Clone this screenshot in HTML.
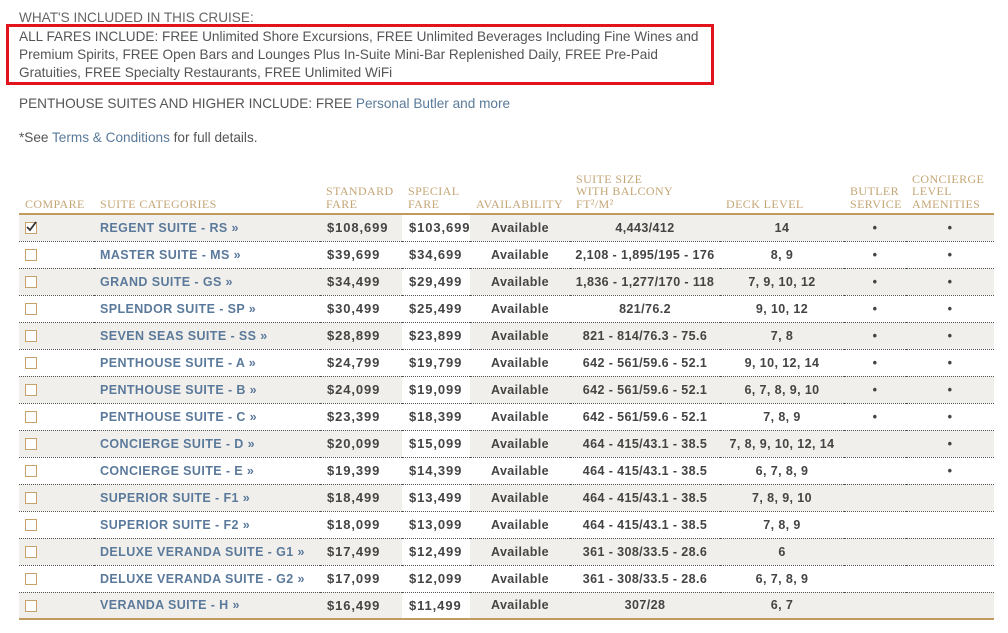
<!DOCTYPE html>
<html><head><meta charset="utf-8"><style>
*{margin:0;padding:0;box-sizing:border-box}
body{width:1008px;height:633px;background:#fff;font-family:"Liberation Sans",sans-serif;color:#555;position:relative;overflow:hidden}
.t{position:absolute;font-size:13.6px;white-space:nowrap}
.box{position:absolute;left:6px;top:24px;width:708px;height:61px;border:3px solid #e3131c}
.lnk{color:#5a7a9a}
table{position:absolute;left:19px;top:166px;width:975px;border-collapse:collapse;table-layout:fixed}
th{font-family:"Liberation Serif",serif;font-weight:normal;color:#c4a676;font-size:12px;letter-spacing:0.4px;text-align:left;vertical-align:bottom;line-height:12.5px;padding:0 0 3px 6px;height:48px;border-bottom:2px solid #c09a5e}
td{height:27px;border-bottom:1px dotted #555;font-weight:bold;font-size:12.5px;letter-spacing:0.4px;color:#444;text-align:center;white-space:nowrap}
tr:last-child td{border-bottom:2px solid #c09a5e}
tbody tr:nth-child(odd) td{background:#f1efeb}
tbody tr td.sp{background:#fff !important}
td.n{text-align:left;color:#5b7a9b;padding-left:6px}
td.c{text-align:left;padding-left:6px}
td.f{text-align:left;padding-left:7px;font-size:13px;letter-spacing:0.9px}
.cb{display:inline-block;width:12px;height:12px;border:1.5px solid #c9a16a;background:#fff;vertical-align:middle;position:relative}
</style></head><body>
<div class="t" style="left:19px;top:10px;color:#666">WHAT'S INCLUDED IN THIS CRUISE:</div>
<div class="box"></div>
<div class="t" style="left:19px;top:28px;line-height:18px">ALL FARES INCLUDE: FREE Unlimited Shore Excursions, FREE Unlimited Beverages Including Fine Wines and<br>Premium Spirits, FREE Open Bars and Lounges Plus In-Suite Mini-Bar Replenished Daily, FREE Pre-Paid<br>Gratuities, FREE Specialty Restaurants, FREE Unlimited WiFi</div>
<div class="t" style="left:19px;top:96px">PENTHOUSE SUITES AND HIGHER INCLUDE: FREE <span class="lnk">Personal Butler and more</span></div>
<div class="t" style="left:19px;top:130px">*See <span class="lnk">Terms &amp; Conditions</span> for full details.</div>
<table>
<colgroup><col style="width:75px"><col style="width:226px"><col style="width:82px"><col style="width:68px"><col style="width:100px"><col style="width:150px"><col style="width:124px"><col style="width:62px"><col style="width:88px"></colgroup>
<thead><tr><th>COMPARE</th><th>SUITE CATEGORIES</th><th>STANDARD<br>FARE</th><th>SPECIAL<br>FARE</th><th>AVAILABILITY</th><th>SUITE SIZE<br>WITH BALCONY<br>FT²/M²</th><th>DECK LEVEL</th><th>BUTLER<br>SERVICE</th><th>CONCIERGE<br>LEVEL<br>AMENITIES</th></tr></thead>
<tbody>
<tr><td class="c"><span class="cb"><svg width="12" height="12" style="position:absolute;left:-1px;top:-2px"><path d="M2 6 L5 9 L11 1" stroke="#333" stroke-width="1.8" fill="none"/></svg></span></td><td class="n">REGENT SUITE - RS »</td><td class="f">$108,699</td><td class="sp f">$103,699</td><td>Available</td><td>4,443/412</td><td>14</td><td>•</td><td>•</td></tr>
<tr><td class="c"><span class="cb"></span></td><td class="n">MASTER SUITE - MS »</td><td class="f">$39,699</td><td class="sp f">$34,699</td><td>Available</td><td>2,108 - 1,895/195 - 176</td><td>8, 9</td><td>•</td><td>•</td></tr>
<tr><td class="c"><span class="cb"></span></td><td class="n">GRAND SUITE - GS »</td><td class="f">$34,499</td><td class="sp f">$29,499</td><td>Available</td><td>1,836 - 1,277/170 - 118</td><td>7, 9, 10, 12</td><td>•</td><td>•</td></tr>
<tr><td class="c"><span class="cb"></span></td><td class="n">SPLENDOR SUITE - SP »</td><td class="f">$30,499</td><td class="sp f">$25,499</td><td>Available</td><td>821/76.2</td><td>9, 10, 12</td><td>•</td><td>•</td></tr>
<tr><td class="c"><span class="cb"></span></td><td class="n">SEVEN SEAS SUITE - SS »</td><td class="f">$28,899</td><td class="sp f">$23,899</td><td>Available</td><td>821 - 814/76.3 - 75.6</td><td>7, 8</td><td>•</td><td>•</td></tr>
<tr><td class="c"><span class="cb"></span></td><td class="n">PENTHOUSE SUITE - A »</td><td class="f">$24,799</td><td class="sp f">$19,799</td><td>Available</td><td>642 - 561/59.6 - 52.1</td><td>9, 10, 12, 14</td><td>•</td><td>•</td></tr>
<tr><td class="c"><span class="cb"></span></td><td class="n">PENTHOUSE SUITE - B »</td><td class="f">$24,099</td><td class="sp f">$19,099</td><td>Available</td><td>642 - 561/59.6 - 52.1</td><td>6, 7, 8, 9, 10</td><td>•</td><td>•</td></tr>
<tr><td class="c"><span class="cb"></span></td><td class="n">PENTHOUSE SUITE - C »</td><td class="f">$23,399</td><td class="sp f">$18,399</td><td>Available</td><td>642 - 561/59.6 - 52.1</td><td>7, 8, 9</td><td>•</td><td>•</td></tr>
<tr><td class="c"><span class="cb"></span></td><td class="n">CONCIERGE SUITE - D »</td><td class="f">$20,099</td><td class="sp f">$15,099</td><td>Available</td><td>464 - 415/43.1 - 38.5</td><td>7, 8, 9, 10, 12, 14</td><td></td><td>•</td></tr>
<tr><td class="c"><span class="cb"></span></td><td class="n">CONCIERGE SUITE - E »</td><td class="f">$19,399</td><td class="sp f">$14,399</td><td>Available</td><td>464 - 415/43.1 - 38.5</td><td>6, 7, 8, 9</td><td></td><td>•</td></tr>
<tr><td class="c"><span class="cb"></span></td><td class="n">SUPERIOR SUITE - F1 »</td><td class="f">$18,499</td><td class="sp f">$13,499</td><td>Available</td><td>464 - 415/43.1 - 38.5</td><td>7, 8, 9, 10</td><td></td><td></td></tr>
<tr><td class="c"><span class="cb"></span></td><td class="n">SUPERIOR SUITE - F2 »</td><td class="f">$18,099</td><td class="sp f">$13,099</td><td>Available</td><td>464 - 415/43.1 - 38.5</td><td>7, 8, 9</td><td></td><td></td></tr>
<tr><td class="c"><span class="cb"></span></td><td class="n">DELUXE VERANDA SUITE - G1 »</td><td class="f">$17,499</td><td class="sp f">$12,499</td><td>Available</td><td>361 - 308/33.5 - 28.6</td><td>6</td><td></td><td></td></tr>
<tr><td class="c"><span class="cb"></span></td><td class="n">DELUXE VERANDA SUITE - G2 »</td><td class="f">$17,099</td><td class="sp f">$12,099</td><td>Available</td><td>361 - 308/33.5 - 28.6</td><td>6, 7, 8, 9</td><td></td><td></td></tr>
<tr><td class="c"><span class="cb"></span></td><td class="n">VERANDA SUITE - H »</td><td class="f">$16,499</td><td class="sp f">$11,499</td><td>Available</td><td>307/28</td><td>6, 7</td><td></td><td></td></tr>
</tbody></table>
</body></html>
